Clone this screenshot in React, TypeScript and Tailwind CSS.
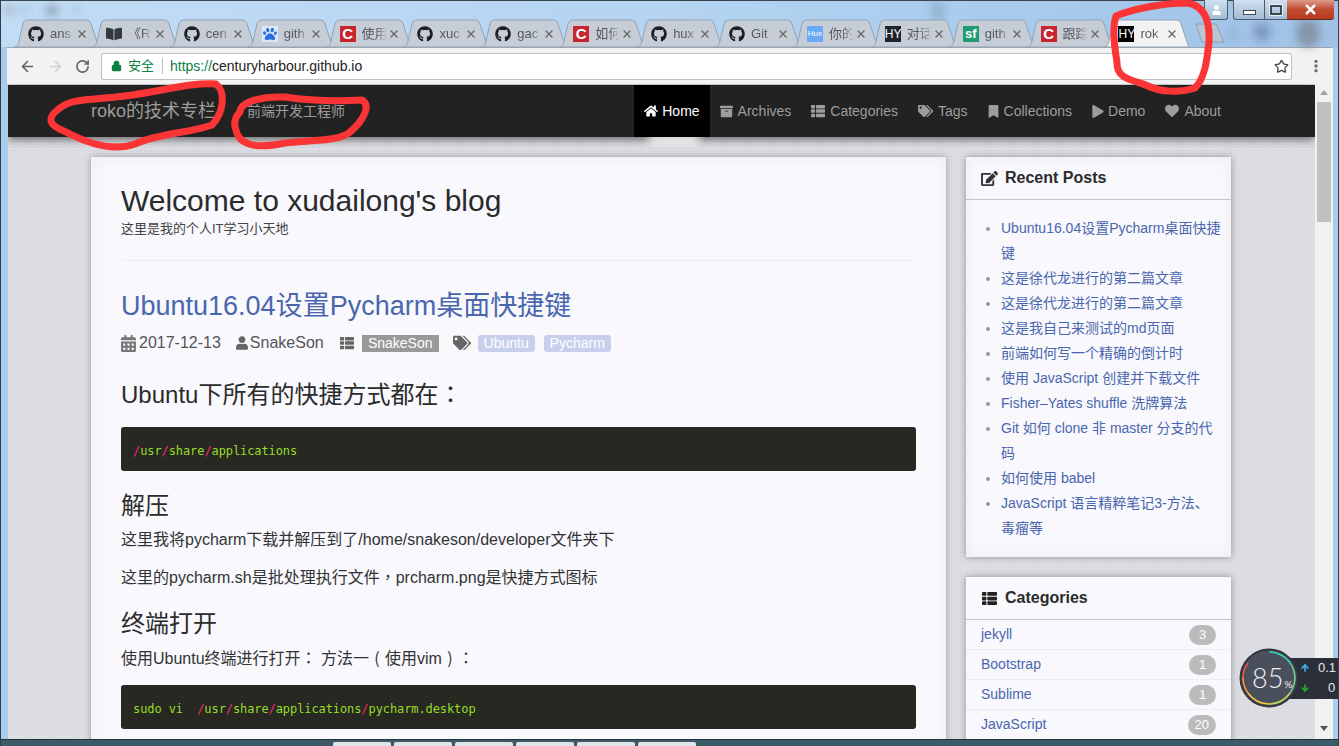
import type { ReactNode } from 'react'
import {
  FaArchive,
  FaBookOpen,
  FaBookmark,
  FaCalendarAlt,
  FaEdit,
  FaGithub,
  FaHeart,
  FaHome,
  FaPaw,
  FaPlay,
  FaTags,
  FaThList,
  FaUser,
} from 'react-icons/fa'
import { ArrowDown, ArrowLeft, ArrowRight, ArrowUp, EllipsisVertical, Lock, RotateCw, Star, X } from 'lucide-react'

const SANS = 'font-["Liberation_Sans","Noto_Sans_CJK_SC",sans-serif]'
const MONO = 'font-["DejaVu_Sans_Mono",monospace] text-[12px] tracking-[-0.09px]'

const github = <FaGithub className="w-[16px] h-[16px] text-[#1b1f23]" />
const csdn = (
  <span className="w-[16px] h-[16px] bg-[#c9252f] text-white text-[15px] leading-[16px] font-bold text-center">C</span>
)

const TABS: { icon: ReactNode; title: string }[] = [
  { icon: github, title: 'ans' },
  { icon: <FaBookOpen className="w-[16px] h-[16px] text-[#33393f]" />, title: '《R' },
  { icon: github, title: 'cen' },
  {
    icon: (
      <span className="w-[16px] h-[16px] bg-[#dbe8fb] flex items-center justify-center">
        <FaPaw className="w-[14px] h-[14px] text-[#2a6fdc]" />
      </span>
    ),
    title: 'gith',
  },
  { icon: csdn, title: '使用' },
  { icon: github, title: 'xuc' },
  { icon: github, title: 'gac' },
  { icon: csdn, title: '如何' },
  { icon: github, title: 'hux' },
  { icon: github, title: 'Git' },
  {
    icon: <span className="w-[16px] h-[16px] bg-[#6aa9f5] text-white text-[8px] leading-[16px] text-center">Hux</span>,
    title: '你的',
  },
  { icon: <span className="w-[16px] h-[16px] bg-[#1d2329] text-white text-[12px] leading-[16px] text-center">HY</span>, title: '对话' },
  {
    icon: <span className="w-[16px] h-[16px] bg-[#1f9d72] text-white text-[13px] leading-[15px] font-bold text-center">sf</span>,
    title: 'gith',
  },
  { icon: csdn, title: '跟踪' },
  { icon: <span className="w-[16px] h-[16px] bg-black text-white text-[12px] leading-[16px] text-center">HY</span>, title: 'rok' },
]

// blurred desktop showing through the aero title bar
const BLOBS = [
  'left-[4px] top-[4px] w-[10px] h-[10px] bg-[#7f9a90]/50',
  'left-[20px] top-[5px] w-[10px] h-[8px] bg-[#8aa4bc]/40',
  'left-[44px] top-[3px] w-[14px] h-[13px] bg-[#667a8c]/50',
  'left-[70px] top-[5px] w-[10px] h-[8px] bg-[#8aa4bc]/40',
  'left-[930px] top-0 w-[14px] h-[20px] bg-[#6f8ba8]/40',
  'left-[1228px] top-[26px] w-[8px] h-[14px] bg-[#7ea8cc]/60',
  'left-[1252px] top-[22px] w-[18px] h-[18px] bg-[#6d84b4]/70',
  'left-[1295px] top-[18px] w-[24px] h-[28px] bg-[#7b8490]/70',
]

const NAV = [
  { icon: <FaHome className="w-[14px] h-[14px]" />, iconBox: 'w-[18px]', label: 'Home', active: true },
  { icon: <FaArchive className="w-[13px] h-[13px]" />, iconBox: 'w-[18px]', label: 'Archives' },
  { icon: <FaThList className="w-[14px] h-[14px]" />, iconBox: 'w-[19px]', label: 'Categories' },
  { icon: <FaTags className="w-[15px] h-[14px]" />, iconBox: 'w-[20px]', label: 'Tags' },
  { icon: <FaBookmark className="w-[11px] h-[13px]" />, iconBox: 'w-[16px]', label: 'Collections' },
  { icon: <FaPlay className="w-[12px] h-[13px]" />, iconBox: 'w-[16px]', label: 'Demo' },
  { icon: <FaHeart className="w-[14px] h-[14px]" />, iconBox: 'w-[19px]', label: 'About' },
]

const RECENT = [
  'Ubuntu16.04设置Pycharm桌面快捷键',
  '这是徐代龙进行的第二篇文章',
  '这是徐代龙进行的第二篇文章',
  '这是我自己来测试的md页面',
  '前端如何写一个精确的倒计时',
  '使用 JavaScript 创建并下载文件',
  'Fisher–Yates shuffle 洗牌算法',
  'Git 如何 clone 非 master 分支的代码',
  '如何使用 babel',
  'JavaScript 语言精粹笔记3-方法、毒瘤等',
]

const CATEGORIES = [
  { name: 'jekyll', count: 3 },
  { name: 'Bootstrap', count: 1 },
  { name: 'Sublime', count: 1 },
  { name: 'JavaScript', count: 20 },
]

function Tab({ icon, title, active }: { icon: ReactNode; title: string; active?: boolean }) {
  return (
    <div className="relative w-[85.9px] h-[28px] -mr-[8px] shrink-0">
      <svg className="absolute inset-0" width="86" height="28" viewBox="0 0 86 28">
        <path
          d="M0 28 C3 28 4 26 5 22 L9 5 C10 2 11 1 14 1 L72 1 C75 1 76 2 77 5 L83 23 C84 26 85 28 86 28 Z"
          fill={active ? '#f2f2f2' : '#c7cdd6'}
          stroke="#8fa3b8"
          strokeWidth="1"
        />
      </svg>
      <div className="relative flex items-center h-full pl-[14px] pt-[2px]">
        <span className="flex w-[16px] h-[16px] overflow-hidden shrink-0">{icon}</span>
        <span className="ml-[6px] w-[26px] whitespace-nowrap text-[13px] text-[#55595e] [mask-image:linear-gradient(90deg,#000_55%,transparent_95%)]">
          {title}
        </span>
        <X className="w-[12px] h-[12px] text-[#666]" strokeWidth={2.6} />
      </div>
    </div>
  )
}

function CodeBlock({ children }: { children: ReactNode }) {
  return (
    <pre className={`${MONO} bg-[#272822] rounded-[3px] h-[44px] px-[12px] leading-[48px] text-[#97dc26]`}>{children}</pre>
  )
}

function Slash() {
  return <span className="text-[#f92672]">/</span>
}

// full-width punctuation sits in the middle of its box in the reference
function Punct({ children }: { children: string }) {
  return <span className='inline-block w-[1em] leading-none text-center font-["Noto_Sans_CJK_TC",sans-serif]'>{children}</span>
}

function Article() {
  return (
    <main className="w-[855px] h-[640px] shrink-0 bg-[#f8f8fd] shadow-[0_0_7px_rgba(0,0,0,0.3),inset_0_0_18px_rgba(0,0,0,0.05)] px-[30px] pt-[27px] text-[#333]">
      <h1 className="text-[30px] leading-[33px] text-[#2b2b2b]">Welcome to xudailong's blog</h1>
      <p className="text-[13px] leading-[18px] mt-[3px] text-[#444]">这里是我的个人IT学习小天地</p>
      <div className="border-b border-[#eee] h-[23px]" />
      <h2 className="mt-[29px] text-[27px] leading-[33px] text-[#4a66ae]">Ubuntu16.04设置Pycharm桌面快捷键</h2>
      <div className="mt-[9px] flex items-center h-[22px] text-[16px] text-[#555]">
        <FaCalendarAlt className="w-[15px] h-[17px] text-[#777]" />
        <span className="ml-[3px]">2017-12-13</span>
        <FaUser className="ml-[15px] w-[12px] h-[14px] text-[#666]" />
        <span className="ml-[2px]">SnakeSon</span>
        <FaThList className="ml-[15px] w-[16px] h-[14px] text-[#666]" />
        <span className="ml-[7px] w-[77px] h-[17px] bg-[#999] text-white text-[14px] leading-[17px] text-center">SnakeSon</span>
        <FaTags className="ml-[14px] w-[18px] h-[16px] text-[#666]" />
        <span className="ml-[7px] w-[57px] h-[17px] rounded-[3px] bg-[#c8cfec] text-white text-[14px] leading-[17px] text-center">Ubuntu</span>
        <span className="ml-[9px] w-[67px] h-[17px] rounded-[3px] bg-[#c8cfec] text-white text-[14px] leading-[17px] text-center">Pycharm</span>
      </div>
      <h3 className="mt-[25px] text-[24px] leading-[32px] text-[#2b2b2b]">
        Ubuntu下所有的快捷方式都在<Punct>：</Punct>
      </h3>
      <div className="mt-[16px]">
        <CodeBlock>
          <Slash />usr<Slash />share<Slash />applications
        </CodeBlock>
      </div>
      <h3 className="mt-[21px] text-[24px] leading-[28px] text-[#2b2b2b]">解压</h3>
      <p className="mt-[8px] text-[16px] leading-[23px]">这里我将pycharm下载并解压到了/home/snakeson/developer文件夹下</p>
      <p className="mt-[15px] text-[16px] leading-[23px]">
        这里的pycharm.sh是批处理执行文件<Punct>，</Punct>prcharm.png是快捷方式图标
      </p>
      <h3 className="mt-[21px] text-[24px] leading-[28px] text-[#2b2b2b]">终端打开</h3>
      <p className="mt-[9px] text-[16px] leading-[23px]">
        使用Ubuntu终端进行打开<Punct>：</Punct> 方法一<Punct>(</Punct>使用vim<Punct>)</Punct><Punct>：</Punct>
      </p>
      <div className="mt-[15px]">
        <CodeBlock>
          sudo vi  <Slash />usr<Slash />share<Slash />applications<Slash />pycharm.desktop
        </CodeBlock>
      </div>
    </main>
  )
}

function CardHeader({ icon, title }: { icon: ReactNode; title: string }) {
  return (
    <div className="flex items-center h-[43px] pl-[15px] border-b border-[#c4c4cc]">
      {icon}
      <span className="text-[16px] font-bold text-[#2b2b2b]">{title}</span>
    </div>
  )
}

function Sidebar() {
  return (
    <aside className="w-[265px] ml-[20px] shrink-0 flex flex-col gap-[20px]">
      <section className="h-[400px] bg-[#f8f8fd] shadow-[0_0_7px_rgba(0,0,0,0.35),inset_0_0_18px_rgba(0,0,0,0.05)]">
        <CardHeader icon={<FaEdit className="w-[17px] h-[15px] mr-[7px] text-[#333]" />} title="Recent Posts" />
        <ul className="pt-[16px] pl-[35px] pr-[10px] list-disc marker:text-[#999] text-[14px] leading-[25px] text-[#4a66ae]">
          {RECENT.map((post, i) => (
            <li key={i}>{post}</li>
          ))}
        </ul>
      </section>
      <section className="h-[200px] bg-[#f8f8fd] shadow-[0_0_7px_rgba(0,0,0,0.35)]">
        <CardHeader icon={<FaThList className="w-[17px] h-[15px] mr-[7px] text-[#222]" />} title="Categories" />
        {CATEGORIES.map(c => (
          <div key={c.name} className="flex items-center justify-between h-[30px] pl-[15px] pr-[15px] border-b border-[#eee] text-[14px] text-[#4a66ae]">
            <span>{c.name}</span>
            <span className="min-w-[27px] h-[20px] px-[7px] rounded-full bg-[#bbb] text-white text-[13px] leading-[20px] text-center">
              {c.count}
            </span>
          </div>
        ))}
      </section>
    </aside>
  )
}

function Annotations() {
  return (
    <svg className="absolute -left-px top-0 pointer-events-none" width="1339" height="746" viewBox="0 0 1339 746">
      <g fill="none" stroke="#fb3535" strokeWidth="7" strokeLinecap="round" strokeLinejoin="round">
        <path d="M60 108 C 72 98, 95 100, 125 96 C 160 92, 190 82, 216 84 C 226 92, 224 112, 212 125 C 190 133, 160 133, 135 144 C 112 152, 85 142, 66 132 C 48 125, 46 118, 60 108 Z" />
        <path d="M240 112 C 240 102, 262 96, 285 97 C 305 100, 330 102, 362 100 C 372 106, 362 122, 350 132 C 340 142, 305 140, 285 143 C 262 148, 240 148, 236 130 C 233 122, 236 116, 240 112 Z" />
        <path d="M1116 16 C 1135 8, 1165 3, 1188 3 C 1205 6, 1210 22, 1209 42 C 1207 60, 1205 78, 1195 88 C 1180 93, 1160 92, 1148 86 C 1135 80, 1116 80, 1117 62 C 1114 45, 1112 28, 1116 16 Z" />
      </g>
    </svg>
  )
}

function NetWidget() {
  return (
    <div className="absolute left-[1238px] top-[648px] w-[100px] h-[60px] overflow-hidden">
      <div className="absolute left-[50px] top-[10px] w-[50px] h-[41px] bg-[#2b2f3a] text-[13px] text-[#e8e8e8]">
        <div className="relative flex items-center h-[20px] pl-[11px]">
          <ArrowUp className="w-[10px] h-[10px] text-[#3fb1ee]" strokeWidth={4} />
          <span className="ml-[8px] whitespace-nowrap">0.1</span>
        </div>
        <div className="relative flex items-center h-[20px] pl-[11px]">
          <ArrowDown className="w-[10px] h-[10px] text-[#2aa82a]" strokeWidth={4} />
          <span className="ml-[18px] whitespace-nowrap">0</span>
        </div>
      </div>
      <svg className="absolute left-0 top-0" width="60" height="60" viewBox="0 0 60 60">
        <circle cx="30" cy="30" r="28.5" fill="#4a4f5c" stroke="#33363f" strokeWidth="2" />
        <g fill="none" strokeWidth="1.6">
          <path d="M30 4 A26 26 0 0 1 53 18" stroke="#3bd0b4" />
          <path d="M53 18 A26 26 0 0 1 51 45" stroke="#6ed18f" />
          <path d="M51 45 A26 26 0 0 1 30 56" stroke="#c9de58" />
          <path d="M30 56 A26 26 0 0 1 9 45" stroke="#f0c840" />
          <path d="M9 45 A26 26 0 0 1 4 30" stroke="#f59237" />
          <path d="M4 30 A26 26 0 0 1 9 15" stroke="#f0504a" />
        </g>
      </svg>
      <div className='absolute left-[13px] top-[14px] flex items-baseline text-[#f0f0f0] font-["Lato",sans-serif] font-light'>
        <span className="text-[27px] leading-[32px]">85</span>
        <span className="text-[10px] ml-[1px] font-normal">%</span>
      </div>
    </div>
  )
}

export default function App() {
  return (
    <div className={`${SANS} relative w-[1339px] h-[746px] overflow-hidden flex flex-col bg-[#a9cbec] border-x border-[#2f3d48]`}>
      {/* title bar + tabs */}
      <div className="relative h-[47px] shrink-0 pt-[18px] pl-[13px] flex border-t border-[#39454f] bg-gradient-to-r from-[#c3dcf5] via-[#b4d4f2] to-[#9fc2e6]">
        {BLOBS.map((blob, i) => (
          <span key={i} className={`absolute ${blob} rounded-full blur-[4px]`} />
        ))}
        {TABS.map((tab, i) => (
          <Tab key={i} icon={tab.icon} title={tab.title} active={i === TABS.length - 1} />
        ))}
        <div className="relative ml-[12px] w-[32px] h-[20px] mt-[4px]">
          <svg width="32" height="20" viewBox="0 0 32 20">
            <polygon points="2,1 22,1 30,19 8,19" fill="#b9c6d4" stroke="#8fa1b3" />
          </svg>
        </div>
        <div className="absolute right-[4px] -top-px flex h-[20px]">
          <div className="w-[24px] mr-[5px] flex items-center justify-center rounded-b-[3px] border border-t-0 border-[#4d5b6a] bg-gradient-to-b from-[#cfe0f0] to-[#a3bbd4]">
            <FaUser className="w-[9px] h-[10px] text-white" />
          </div>
          <div className="w-[32px] flex items-center justify-center rounded-bl-[3px] border border-t-0 border-[#4d5b6a] bg-gradient-to-b from-[#cfe0f0] to-[#a3bbd4]">
            <span className="mt-[5px] w-[13px] h-[5px] bg-white border border-[#3d4852]" />
          </div>
          <div className="w-[22px] flex items-center justify-center border-b border-[#4d5b6a] bg-gradient-to-b from-[#cfe0f0] to-[#a3bbd4]">
            <span className="w-[12px] h-[10px] bg-transparent border-2 border-[#3d4852] outline outline-white/70" />
          </div>
          <div className="w-[47px] flex items-center justify-center rounded-br-[3px] border-b border-[#5a2a20] bg-gradient-to-b from-[#dc9a8a] via-[#c04a30] to-[#b83a20]">
            <X className="w-[15px] h-[15px] text-white" strokeWidth={4} />
          </div>
        </div>
      </div>

      {/* toolbar */}
      <div className="h-[37px] shrink-0 ml-[6px] mr-[5px] bg-[#f2f2f2] flex items-center pl-[12px] pr-[8px] border-t border-[#9aa5b0]">
        <ArrowLeft className="w-[17px] h-[17px] text-[#5f6368]" strokeWidth={2.2} />
        <ArrowRight className="ml-[11px] w-[17px] h-[17px] text-[#cfcfcf]" strokeWidth={2.2} />
        <RotateCw className="ml-[11px] w-[15px] h-[15px] text-[#5f6368]" strokeWidth={2.6} />
        <div className="ml-[11px] w-[1191px] h-[27px] bg-white border border-[#bfbfbf] rounded-[2px] flex items-center pl-[9px] text-[14px]">
          <Lock className="w-[11px] h-[12px] text-[#0b8043] fill-[#0b8043]" strokeWidth={2.5} />
          <span className="ml-[6px] text-[#0b8043] text-[13px]">安全</span>
          <span className="ml-[8px] h-[16px] border-l border-[#bbb]" />
          <span className="ml-[7px] text-[#0b8043]">https://</span>
          <span className="text-[#222]">centuryharbour.github.io</span>
          <Star className="ml-auto mr-[2px] w-[15px] h-[15px] text-[#444]" strokeWidth={2} />
        </div>
        <EllipsisVertical className="ml-[16px] w-[16px] h-[16px] text-[#666]" strokeWidth={3} />
      </div>

      {/* page */}
      <div className="flex-1 min-h-0 ml-[7px] mr-[5px] flex bg-white">
        <div className="relative w-[1307px] shrink-0 overflow-hidden bg-[#dcdde2] bg-[repeating-linear-gradient(90deg,rgba(255,255,255,0.12)_0,rgba(255,255,255,0.12)_1px,transparent_1px,transparent_3px),repeating-linear-gradient(0deg,rgba(0,0,0,0.02)_0,rgba(0,0,0,0.02)_1px,transparent_1px,transparent_3px)]">
          <nav className="relative h-[52px] mt-px bg-[#222] flex items-stretch pl-[83px] pr-[84px] shadow-[0_3px_8px_rgba(0,0,0,0.5)]">
            <span className="self-center text-[18px] text-[#9d9d9d]">roko的技术专栏</span>
            <span className="self-center ml-[31px] text-[14px] text-[#9d9d9d]">前端开发工程师</span>
            <div className="ml-auto flex">
              {NAV.map(item => (
                <div
                  key={item.label}
                  className={`relative flex items-center px-[10px] text-[14px] ${item.active ? 'bg-black text-white' : 'text-[#9d9d9d]'}`}
                >
                  <span className={`${item.iconBox} shrink-0`}>{item.icon}</span>
                  {item.label}
                  {item.active && (
                    <span className="absolute left-[10px] right-[6px] top-full h-[10px] overflow-hidden">
                      <span className="block mx-[4px] -mt-[4px] h-[12px] bg-white/80 rounded-full blur-[4px]" />
                    </span>
                  )}
                </div>
              ))}
            </div>
          </nav>
          <div className="flex pl-[83px] pt-[20px]">
            <Article />
            <Sidebar />
          </div>
        </div>
        <div className="w-[18px] shrink-0 bg-[#f1f1f1] flex flex-col items-center pt-[6px]">
          <span className="w-0 h-0 border-x-[4px] border-x-transparent border-b-[5px] border-b-[#a3a3a3]" />
          <span className="mt-[7px] w-[14px] h-[120px] bg-[#c1c1c1]" />
          <span className="mt-auto mb-[8px] w-0 h-0 border-x-[4px] border-x-transparent border-t-[5px] border-t-[#505050]" />
        </div>
      </div>

      {/* taskbar strip */}
      <div className="h-[7px] shrink-0 bg-[#3c5a68] flex items-end pl-[332px] gap-[3px] border-t border-[#22343e]">
        {[0, 1, 2, 3, 4, 5].map(i => (
          <span key={i} className="w-[58px] h-[4px] bg-[#dfe3e6] rounded-t-[2px]" />
        ))}
      </div>

      <Annotations />
      <NetWidget />
    </div>
  )
}
